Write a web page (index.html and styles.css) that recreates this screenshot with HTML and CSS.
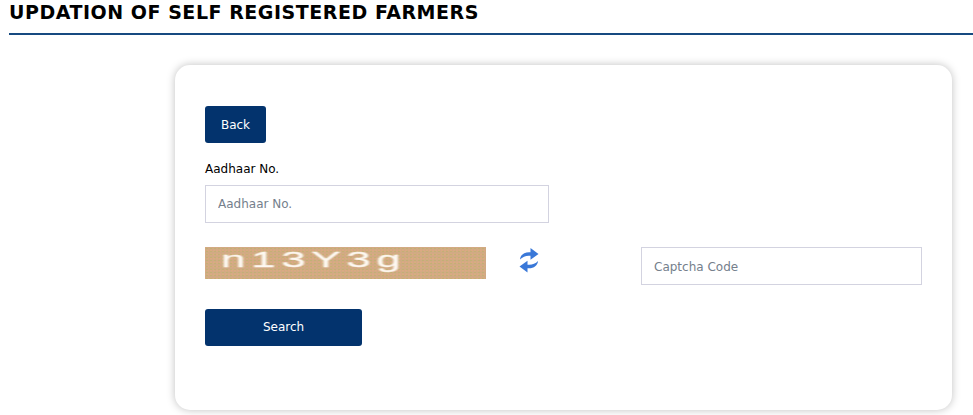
FILE: index.html
```html
<!DOCTYPE html>
<html lang="en">
<head>
  <meta charset="UTF-8" />
  <title>Updation of Self Registered Farmers</title>
  <link rel="stylesheet" href="styles.css">
</head>
<body>
  <div class="page-head">
    <h2>UPDATION OF SELF REGISTERED FARMERS</h2>
  </div>

  <div class="card">
    <button class="btn btn-back">Back</button>

    <label class="field-label" for="aadhaar">Aadhaar No.</label>
    <input class="field field-aadhaar" type="text" id="aadhaar" placeholder="Aadhaar No." />

    <div class="captcha-row">
      <div class="captcha-img"><span>n13Y3g</span></div>
      <div class="refresh">
        <svg width="20" height="25" viewBox="0 0 20 25">
          <path fill="#3a78d8" d="M1 11.500C1.500 6.500 5.500 3.800 11.500 4.300V0L19.500 6 11.500 11.800V7.800C7.500 7.300 3.800 8.500 1 11.500z"/>
          <path fill="#3a78d8" d="M19 13C18.500 18 14.500 20.700 8.500 20.200V24.500L.5 18.500 8.500 12.700V16.700C12.500 17.200 16.200 16 19 13z"/>
        </svg>
      </div>
      <input class="field field-captcha" type="text" placeholder="Captcha Code" />
    </div>

    <button class="btn btn-search">Search</button>
  </div>
</body>
</html>
```

FILE: styles.css
```css
body {
  margin: 0;
  padding: 0 0 5px;
  background: #ffffff;
  color: #000;
  font-family: 'DejaVu Sans', Verdana, sans-serif;
  font-size: 12px;
  overflow: hidden;
}

.page-head {
  margin-left: 9px;
  height: 33px;
  border-bottom: 2px solid #164a80;
}

.page-head h2 {
  margin: 0;
  font-size: 19px;
  line-height: 24px;
  letter-spacing: 0.53px;
  font-weight: bold;
}

.card {
  margin: 30px 0 0 175px;
  width: 717px;
  height: 263px;
  padding: 41px 30px 41px;
  background: #fff;
  border-radius: 15px;
  box-shadow: 0 0 8px rgba(0, 0, 0, 0.25);
}

.btn {
  display: block;
  height: 37px;
  background: #03336d;
  color: #fff;
  border: none;
  border-radius: 3px;
  font-family: 'DejaVu Sans', Verdana, sans-serif;
  font-size: 12px;
  cursor: pointer;
}

.btn-back {
  width: 61px;
}

.btn-search {
  width: 157px;
  margin-top: 24px;
  padding-bottom: 3px;
}

.field-label {
  display: block;
  margin-top: 19px;
  line-height: 15px;
  height: 23px;
}

.field {
  display: block;
  box-sizing: border-box;
  height: 38px;
  padding: 0 12px;
  border: 1px solid #d3d3e0;
  background: #fff;
  font-family: 'DejaVu Sans', Verdana, sans-serif;
  font-size: 12px;
}

.field::placeholder {
  color: #75808c;
  opacity: 1;
}

.field-aadhaar {
  width: 344px;
}

.field-captcha {
  width: 281px;
  padding-top: 2px;
}

.captcha-row {
  display: flex;
  align-items: flex-start;
  margin-top: 24px;
}

.captcha-img {
  width: 281px;
  height: 32px;
  background-color: #d0aa84;
  background-image:
    radial-gradient(circle, rgba(185, 180, 105, 0.6) 0 1px, transparent 1px),
    radial-gradient(circle, rgba(240, 170, 125, 0.65) 0 1px, transparent 1px);
  background-size: 4px 3px, 3px 4px;
  background-position: 0 0, 1.5px 1.5px;
  overflow: hidden;
}

.captcha-img span {
  display: inline-block;
  margin-left: 16px;
  font-family: 'Liberation Sans', Arial, sans-serif;
  font-size: 22px;
  line-height: 26px;
  letter-spacing: 2.8px;
  color: #fdf9f2;
  -webkit-text-stroke: 0.3px #fdf9f2;
  transform: scaleX(2);
  transform-origin: left center;
  filter: blur(0.4px);
}

.refresh {
  width: 155px;
  padding: 1px 0 0 33px;
  box-sizing: border-box;
  height: 26px;
}
```
